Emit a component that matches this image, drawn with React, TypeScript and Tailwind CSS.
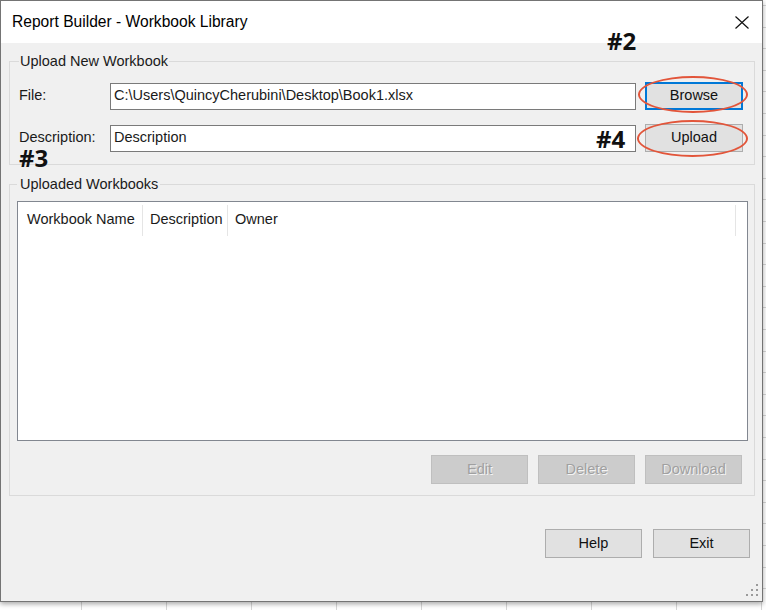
import React from "react";

const F = { fontFamily: '"Liberation Sans", Arial, sans-serif' } as const;

function WinButton({ label, focused, disabled, className = "" }: { label: string; focused?: boolean; disabled?: boolean; className?: string }) {
  if (disabled) {
    return (
      <div className={`flex h-[29px] w-[97px] items-center justify-center border border-[#bfbfbf] bg-[#cccccc] text-[14.5px] text-[#a0a0a0] [text-shadow:1px_1px_0_#f4f4f4] ${className}`}>
        {label}
      </div>
    );
  }
  return (
    <div
      className={`flex items-center justify-center bg-[#e1e1e1] text-[14.5px] text-[#111] ${
        focused ? "border-2 border-[#0078d7]" : "border border-[#adadad]"
      } ${className}`}
    >
      {label}
    </div>
  );
}

function Ellipse({ className }: { className: string }) {
  return <div className={`pointer-events-none absolute rounded-[50%] border-[2.5px] border-[#e2553a] ${className}`} />;
}

export default function App() {
  return (
    <div
      style={F}
      className="relative h-[610px] w-[766px] overflow-hidden bg-white bg-[repeating-linear-gradient(90deg,transparent_0_81px,#d6d6d6_81px_82px,transparent_82px_85px),repeating-linear-gradient(180deg,transparent_0_5px,#d6d6d6_5px_6px,transparent_6px_21.6px)]"
    >
      <div className="relative flex h-[602px] w-[763px] flex-col border border-[#747474] bg-white shadow-[0_2px_5px_rgba(0,0,0,0.35)]">
        {/* Title bar */}
        <div className="flex h-[42px] shrink-0 items-center justify-between bg-white pl-[11px] pr-[13px]">
          <span className="text-[15.6px] text-black">Report Builder - Workbook Library</span>
          <svg width="14" height="13" viewBox="0 0 14 13" className="mt-[1px]">
            <path d="M0.5 0.5 L13.5 12.5 M13.5 0.5 L0.5 12.5" stroke="#111" strokeWidth="1.2" fill="none" />
          </svg>
        </div>

        {/* Body */}
        <div className="flex flex-1 flex-col bg-[#f0f0f0] pl-[8px] pr-[7px] text-[14.5px] text-[#1a1a1a]">
          {/* Upload group */}
          <fieldset className="mt-[10px] border border-[#dadada] pb-[12px] pl-[9px] pr-[11px] pt-[13px]">
            <legend className="px-[1px] text-[14.5px] leading-[16px]">Upload New Workbook</legend>
            <div className="flex h-[28px] items-center">
              <span className="w-[91px]">File:</span>
              <div className="flex h-[27px] w-[526px] items-center border border-[#7a7a7a] bg-white pl-[3px]">
                C:\Users\QuincyCherubini\Desktop\Book1.xlsx
              </div>
              <div className="relative ml-[9px] h-[28px] w-[98px]">
                <WinButton label="Browse" focused className="h-full w-full" />
                <Ellipse className="-bottom-[3px] -left-[7px] -right-[5px] -top-[6px]" />
              </div>
            </div>
            <div className="mt-[14px] flex h-[28px] items-center">
              <span className="w-[91px]">Description:</span>
              <div className="flex h-[27px] w-[526px] items-center border border-[#7a7a7a] bg-white pl-[3px]">
                Description
              </div>
              <div className="relative ml-[9px] h-[28px] w-[98px]">
                <WinButton label="Upload" className="h-full w-full" />
                <Ellipse className="-bottom-[5px] -left-[8px] -right-[5px] -top-[4px]" />
              </div>
            </div>
          </fieldset>

          {/* Uploaded group */}
          <fieldset className="mt-[11px] border border-[#dadada] pb-[11px] pl-[7px] pr-[6px] pt-[9px]">
            <legend className="pl-[3px] pr-[2px] text-[14.5px] leading-[16px]">Uploaded Workbooks</legend>
            <div className="h-[240px] border border-[#828790] bg-white">
              <div className="flex h-[34px] items-center pt-[2px]">
                <div className="flex h-[31px] w-[125px] items-center border-r border-[#e5e5e5] pl-[9px]">Workbook Name</div>
                <div className="flex h-[31px] w-[85px] items-center border-r border-[#e5e5e5] pl-[7px]">Description</div>
                <div className="flex h-[31px] w-[508px] items-center border-r border-[#e5e5e5] pl-[7px]">Owner</div>
              </div>
            </div>
            <div className="mr-[6px] mt-[14px] flex justify-end gap-[10px]">
              <WinButton label="Edit" disabled />
              <WinButton label="Delete" disabled />
              <WinButton label="Download" disabled />
            </div>
          </fieldset>

          {/* Bottom buttons */}
          <div className="mr-[5px] mt-[33px] flex justify-end gap-[11px]">
            <WinButton label="Help" className="h-[29px] w-[97px]" />
            <WinButton label="Exit" className="h-[29px] w-[97px]" />
          </div>
        </div>

        {/* Resize grip */}
        <div className="absolute bottom-[5px] right-[4px] grid grid-cols-3 gap-[3px]">
          <span className="h-[2px] w-[2px]" />
          <span className="h-[2px] w-[2px]" />
          <span className="h-[2px] w-[2px] bg-[#9a9a9a]" />
          <span className="h-[2px] w-[2px]" />
          <span className="h-[2px] w-[2px] bg-[#9a9a9a]" />
          <span className="h-[2px] w-[2px] bg-[#9a9a9a]" />
          <span className="h-[2px] w-[2px] bg-[#9a9a9a]" />
          <span className="h-[2px] w-[2px] bg-[#9a9a9a]" />
          <span className="h-[2px] w-[2px] bg-[#9a9a9a]" />
        </div>

        {/* Annotations */}
        <span className="absolute left-[606px] top-[31px] text-[24px] font-bold leading-[18px] text-[#111]" style={{ fontFamily: '"Open Sans", sans-serif' }}>#2</span>
        <span className="absolute left-[595px] top-[129px] text-[24px] font-bold leading-[18px] text-[#111]" style={{ fontFamily: '"Open Sans", sans-serif' }}>#4</span>
        <span className="absolute left-[18px] top-[148px] text-[24px] font-bold leading-[18px] text-[#111]" style={{ fontFamily: '"Open Sans", sans-serif' }}>#3</span>
      </div>
    </div>
  );
}
